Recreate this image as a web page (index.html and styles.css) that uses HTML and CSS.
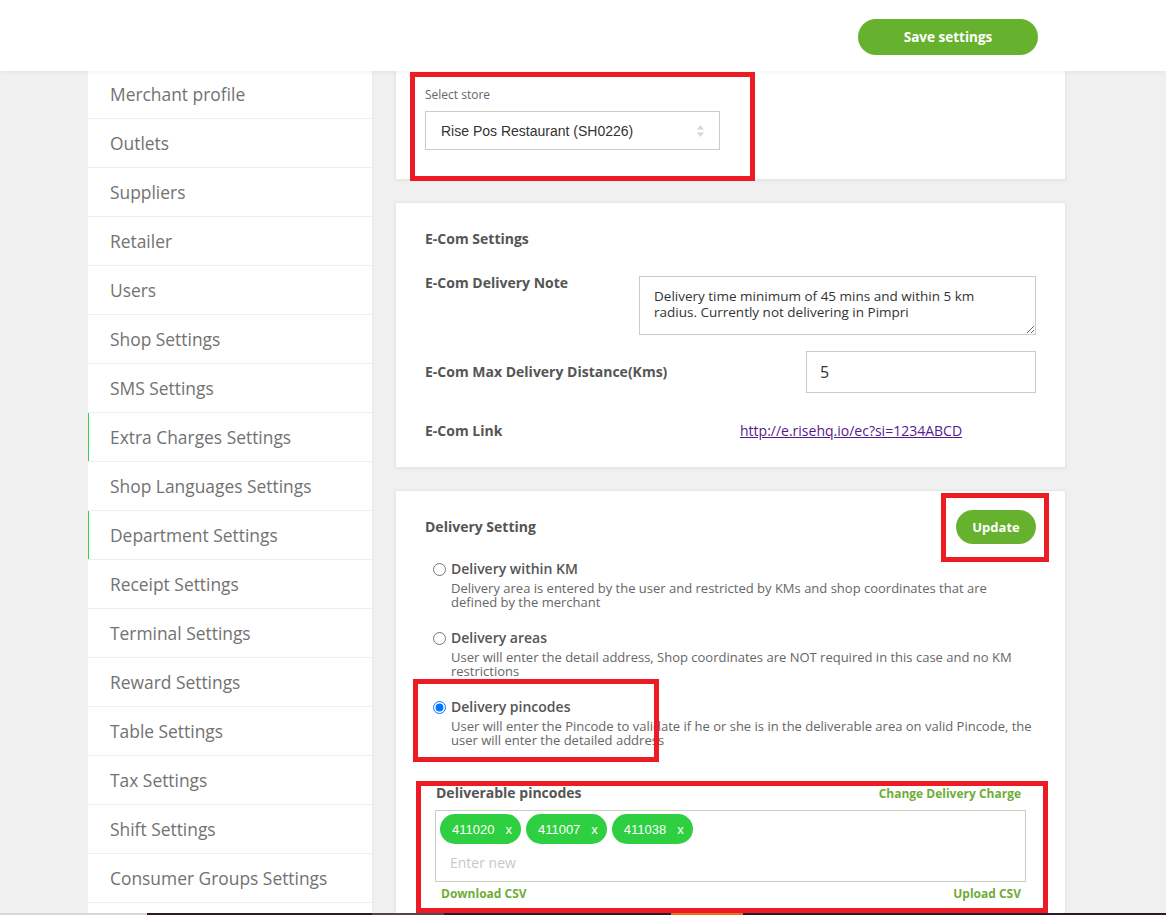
FILE: index.html
```html
<!DOCTYPE html>
<html lang="en">
<head>
    <meta charset="UTF-8">
    <title>Shop settings</title>
    <link rel="stylesheet" href="styles.css">
</head>
<body>
    <header class="topbar">
        <button class="btn-save">Save settings</button>
    </header>

    <div class="layout">
        <nav class="side-menu">
            <div class="menu-item">Merchant profile</div>
            <div class="menu-item">Outlets</div>
            <div class="menu-item">Suppliers</div>
            <div class="menu-item">Retailer</div>
            <div class="menu-item">Users</div>
            <div class="menu-item">Shop Settings</div>
            <div class="menu-item">SMS Settings</div>
            <div class="menu-item marked">Extra Charges Settings</div>
            <div class="menu-item">Shop Languages Settings</div>
            <div class="menu-item marked">Department Settings</div>
            <div class="menu-item">Receipt Settings</div>
            <div class="menu-item">Terminal Settings</div>
            <div class="menu-item">Reward Settings</div>
            <div class="menu-item">Table Settings</div>
            <div class="menu-item">Tax Settings</div>
            <div class="menu-item">Shift Settings</div>
            <div class="menu-item">Consumer Groups Settings</div>
        </nav>

        <main class="content">
            <section class="card store-card">
                <label class="small-label">Select store</label>
                <div class="store-select">
                    <span>Rise Pos Restaurant (SH0226)</span>
                    <svg class="select-arrows" width="9" height="14" viewBox="0 0 9 14">
                        <path d="M4.5 1 L8 5.5 H1 Z" fill="#d6d6d6"/>
                        <path d="M4.5 13 L8 8.5 H1 Z" fill="#d6d6d6"/>
                    </svg>
                </div>
            </section>

            <section class="card ecom-card">
                <h3 class="card-title">E-Com Settings</h3>
                <div class="field-row note-row">
                    <span class="field-label">E-Com Delivery Note</span>
                    <textarea class="note-input">Delivery time minimum of 45 mins and within 5 km radius. Currently not delivering in Pimpri</textarea>
                </div>
                <div class="field-row distance-row">
                    <span class="field-label">E-Com Max Delivery Distance(Kms)</span>
                    <input class="distance-input" type="text" value="5">
                </div>
                <div class="field-row link-row">
                    <span class="field-label">E-Com Link</span>
                    <div class="link-box"><a href="#">http://e.risehq.io/ec?si=1234ABCD</a></div>
                </div>
            </section>

            <section class="card delivery-card">
                <div class="delivery-head">
                    <h3 class="card-title">Delivery Setting</h3>
                    <button class="btn-update">Update</button>
                </div>

                <div class="options">
                    <label class="option">
                        <span class="option-title"><input type="radio" name="mode">Delivery within KM</span>
                        <span class="option-desc">Delivery area is entered by the user and restricted by KMs and shop coordinates that are defined by the merchant</span>
                    </label>
                    <label class="option">
                        <span class="option-title"><input type="radio" name="mode">Delivery areas</span>
                        <span class="option-desc">User will enter the detail address, Shop coordinates are NOT required in this case and no KM restrictions</span>
                    </label>
                    <label class="option">
                        <span class="option-title"><input type="radio" name="mode" checked>Delivery pincodes</span>
                        <span class="option-desc">User will enter the Pincode to validate if he or she is in the deliverable area on valid Pincode, the user will enter the detailed address</span>
                    </label>
                </div>

                <div class="pincodes">
                    <div class="pin-head">
                        <span class="pin-title">Deliverable pincodes</span>
                        <a class="green-link" href="#">Change Delivery Charge</a>
                    </div>
                    <div class="pin-box">
                        <div class="chips">
                            <span class="chip">411020<i>x</i></span>
                            <span class="chip">411007<i>x</i></span>
                            <span class="chip">411038<i>x</i></span>
                        </div>
                        <input class="pin-input" type="text" placeholder="Enter new">
                    </div>
                    <div class="pin-foot">
                        <a class="green-link" href="#">Download CSV</a>
                        <a class="green-link" href="#">Upload CSV</a>
                    </div>
                </div>
            </section>
        </main>
    </div>

    <!-- annotation boxes drawn over the screenshot -->
    <div class="mark mark-store"></div>
    <div class="mark mark-update"></div>
    <div class="mark mark-radio"></div>
    <div class="mark mark-pins"></div>

    <div class="taskbar"></div>
</body>
</html>
```

FILE: styles.css
```css
:root {
    --bg-color: #f0f0f0;
    --green: #66b22e;
    --chip-green: #2ecf40;
    --label-color: #555;
    --line-color: #c6d0c3;
}
html, body {
    height: 100%;
    overflow: hidden;
}
body {
    margin: 0;
    background-color: var(--bg-color);
    font-family: "Open Sans", "Liberation Sans", sans-serif;
    color: var(--label-color);
}

.topbar {
    position: relative;
    z-index: 2;
    height: 71px;
    box-sizing: border-box;
    padding: 19px 128px 0 0;
    display: flex;
    justify-content: flex-end;
    align-items: flex-start;
    background: #fff;
    box-shadow: 0 2px 4px rgba(120, 140, 110, 0.08);
}
.btn-save {
    width: 180px;
    height: 36px;
    border: none;
    border-radius: 18px;
    background: var(--green);
    color: #fff;
    font-family: inherit;
    font-size: 13.5px;
    font-weight: 700;
}

.layout {
    display: flex;
    gap: 22px;
    padding-left: 88px;
    margin-top: -1px;
}

.side-menu {
    width: 285px;
    flex-shrink: 0;
    background: #fff;
    border-right: 1px solid #e6ece3;
    box-sizing: border-box;
}
.menu-item {
    height: 48px;
    border-bottom: 1px solid #eee;
    padding-left: 22px;
    display: flex;
    align-items: center;
    font-size: 17.4px;
    color: #727272;
}
.menu-item.marked {
    box-shadow: inset 1px 0 0 #3ccf4a;
}

.content {
    width: 671px;
    display: flex;
    flex-direction: column;
    gap: 22px;
}
.card {
    background: #fff;
    border: 1px solid #e3eadf;
    box-shadow: 0 1px 3px rgba(0, 0, 0, 0.05);
    padding: 0 29px;
}
.card-title {
    margin: 0;
    font-size: 14px;
    font-weight: 700;
    line-height: 20px;
}

.store-card {
    padding-top: 16px;
    padding-bottom: 29px;
}
.small-label {
    display: block;
    font-size: 12px;
    line-height: 16px;
    color: #666;
}
.store-select {
    margin-top: 8px;
    width: 295px;
    height: 39px;
    box-sizing: border-box;
    border: 1px solid var(--line-color);
    padding: 0 14px 0 15px;
    display: flex;
    align-items: center;
    justify-content: space-between;
    font-family: "Liberation Sans", Arial, sans-serif;
    font-size: 14px;
    color: #333;
}

.ecom-card {
    padding-top: 26px;
    padding-bottom: 27px;
}
.field-row {
    display: flex;
    justify-content: space-between;
}
.field-label {
    font-size: 14px;
    font-weight: 700;
    line-height: 18px;
}
.note-row {
    margin-top: 27px;
    align-items: flex-start;
}
.note-row .field-label {
    margin-top: -2px;
}
.note-input {
    width: 397px;
    height: 59px;
    box-sizing: border-box;
    border: 1px solid var(--line-color);
    padding: 11px 40px 0 14px;
    font-family: inherit;
    font-size: 13.5px;
    line-height: 16px;
    color: #333;
    resize: vertical;
}
.distance-row {
    margin-top: 16px;
    align-items: center;
}
.distance-input {
    width: 230px;
    height: 42px;
    box-sizing: border-box;
    border: 1px solid var(--line-color);
    padding: 0 13px;
    font-family: inherit;
    font-size: 16px;
    color: #333;
}
.link-row {
    margin-top: 28px;
    align-items: center;
}
.link-box {
    width: 296px;
    font-size: 14px;
}
.link-box a {
    color: #551a8b;
}

.delivery-card {
    padding-top: 19px;
    padding-bottom: 40px;
}
.delivery-head {
    display: flex;
    justify-content: space-between;
    align-items: center;
}
.btn-update {
    width: 80px;
    height: 34px;
    border: none;
    border-radius: 17px;
    background: var(--green);
    color: #fff;
    font-family: inherit;
    font-size: 13px;
    font-weight: 700;
}
.options {
    margin-top: 16px;
    display: flex;
    flex-direction: column;
    gap: 20px;
}
.option {
    display: flex;
    flex-direction: column;
    padding-left: 8px;
}
.option-title {
    display: flex;
    align-items: center;
    font-size: 14px;
    font-weight: 600;
    line-height: 18px;
}
.option-title input {
    width: 13px;
    height: 13px;
    margin: 0 5px 0 0;
}
.option-desc {
    margin-top: 3px;
    padding-left: 18px;
    font-size: 13px;
    line-height: 14px;
    color: #666;
}

.pincodes {
    margin-top: 37px;
    padding: 0 10px;
}
.pin-head, .pin-foot {
    display: flex;
    justify-content: space-between;
    align-items: center;
}
.pin-head {
    padding-right: 5px;
}
.pin-title {
    padding-left: 1px;
    font-size: 14px;
    font-weight: 700;
    line-height: 18px;
}
.green-link {
    font-size: 12px;
    font-weight: 700;
    color: #6fad37;
    text-decoration: none;
}
.pin-box {
    margin-top: 8px;
    height: 72px;
    box-sizing: border-box;
    border: 1px solid var(--line-color);
    padding: 3px 4px 0;
}
.chips {
    display: flex;
    gap: 5px;
}
.chip {
    height: 30px;
    border-radius: 15px;
    background: var(--chip-green);
    color: #fff;
    display: inline-flex;
    align-items: center;
    padding: 0 9px 0 12px;
    font-family: "Liberation Sans", Arial, sans-serif;
    font-size: 13px;
}
.chip i {
    font-style: normal;
    margin-left: 11px;
}
.pin-input {
    display: block;
    width: 100%;
    height: 36px;
    box-sizing: border-box;
    border: none;
    outline: none;
    padding: 0 10px;
    font-family: inherit;
    font-size: 14px;
}
.pin-input::placeholder {
    color: #c8c8c8;
}
.pin-foot {
    margin-top: 4px;
    padding: 0 5px 0 6px;
    line-height: 16px;
}

.mark {
    position: absolute;
    z-index: 3;
    box-sizing: border-box;
    border: 5px solid #ed1c24;
}
.mark-store {
    left: 410px;
    top: 72px;
    width: 345px;
    height: 109px;
}
.mark-update {
    left: 941px;
    top: 493px;
    width: 108px;
    height: 69px;
}
.mark-radio {
    left: 413px;
    top: 679px;
    width: 246px;
    height: 83px;
}
.mark-pins {
    left: 416px;
    top: 781px;
    width: 632px;
    height: 132px;
}

.taskbar {
    position: fixed;
    left: 0;
    right: 0;
    bottom: 0;
    height: 2px;
    z-index: 4;
    background: linear-gradient(to right,
        #d8d8d8 0 147px, #2c1a2b 147px 372px, #54424f 372px 444px,
        #2c1a2b 444px 671px, #e2741f 671px 743px, #2c1a2b 743px);
}
```
